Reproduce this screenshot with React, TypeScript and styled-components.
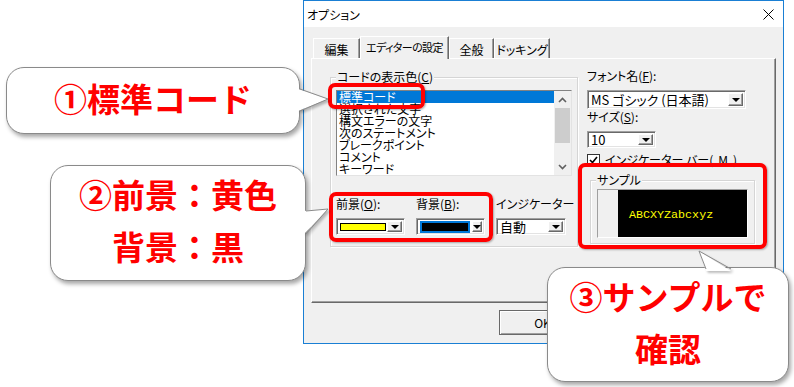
import React from 'react';
import styled, { createGlobalStyle } from 'styled-components';

const uiFont = '"Noto Sans CJK JP", "Noto Sans", sans-serif';

const GlobalStyle = createGlobalStyle`
  body {
    margin: 0;
    background: #fff;
    font-family: ${uiFont};
    font-feature-settings: "palt";
    color: #000;
  }
`;

const Root = styled.div`
  position: relative;
  width: 794px;
  height: 387px;
  overflow: hidden;
  background: #fff;
  padding-left: 303px;
  box-sizing: border-box;
`;

const Dialog = styled.div`
  width: 481px;
  height: 344px;
  border: 1px solid #1a7fd4;
  box-sizing: border-box;
  display: flex;
  flex-direction: column;
  background: #f0f0f0;
`;

const TitleBar = styled.div`
  height: 26px;
  flex: none;
  background: #fff;
  display: flex;
  align-items: center;
  justify-content: space-between;
  padding: 0 9px 0 3px;
  font-size: 12px;
`;

const Body = styled.div`
  flex: 1;
  padding: 8px 7px 0 7px;
  display: flex;
  flex-direction: column;
`;

const TabRow = styled.div`
  display: flex;
  align-items: flex-end;
  padding-left: 2px;
  height: 23px;
`;

const Tab = styled.div<{ $active?: boolean; $w: number }>`
  width: ${(p) => p.$w}px;
  height: ${(p) => (p.$active ? 23 : 20)}px;
  margin-bottom: ${(p) => (p.$active ? -1 : 0)}px;
  position: relative;
  z-index: ${(p) => (p.$active ? 2 : 1)};
  box-sizing: border-box;
  background: #f0f0f0;
  border-top: 1px solid #fff;
  border-left: 1px solid #fff;
  border-right: 1px solid #696969;
  box-shadow: inset -1px 0 0 #a0a0a0;
  font-size: ${(p) => (p.$active ? 11 : 12)}px;
  letter-spacing: ${(p) => (p.$active ? -0.6 : 0)}px;
  line-height: 14px;
  padding-top: ${(p) => (p.$active ? 3 : 4)}px;
  text-align: center;
  white-space: nowrap;
`;

const Panel = styled.div`
  height: 245px;
  box-sizing: border-box;
  border-top: 1px solid #fff;
  border-left: 1px solid #fff;
  border-right: 1px solid #696969;
  border-bottom: 1px solid #696969;
  box-shadow: inset -1px -1px 0 #a0a0a0;
  padding: 18px 0 0 18px;
  display: flex;
  align-items: flex-start;
`;

const Frame = styled.div<{ $w: number; $h: number }>`
  position: relative;
  width: ${(p) => p.$w}px;
  height: ${(p) => p.$h}px;
  box-sizing: border-box;
  border: 1px solid #d5d5d5;
  box-shadow: inset 1px 1px 0 #fff, 1px 1px 0 #fff;
`;

const FrameLabel = styled.div`
  position: absolute;
  top: -8px;
  left: 5px;
  padding: 0 1px;
  background: #f0f0f0;
  font-size: 12px;
  line-height: 14px;
  white-space: nowrap;
`;

const CodeFrame = styled(Frame)`
  padding: 12px 0 0 5px;
`;

const ListBox = styled.div`
  width: 236px;
  height: 86px;
  box-sizing: border-box;
  display: flex;
  border: 1px solid;
  border-color: #828282 #e3e3e3 #e3e3e3 #828282;
  background: #fff;
`;

const ListItems = styled.div`
  flex: 1;
  overflow: hidden;
`;

const ListItem = styled.div<{ $sel?: boolean }>`
  height: 12px;
  line-height: 12px;
  font-size: 12px;
  padding-left: 2px;
  white-space: nowrap;
  background: ${(p) => (p.$sel ? '#0078d7' : 'transparent')};
  color: ${(p) => (p.$sel ? '#fff' : '#000')};
`;

const ScrollBar = styled.div`
  width: 17px;
  display: flex;
  flex-direction: column;
  background: #f0f0f0;
`;

const ScrollArrow = styled.div`
  height: 17px;
  display: flex;
  align-items: center;
  justify-content: center;
`;

const ScrollTrack = styled.div`
  flex: 1;
  padding: 0 1px;
`;

const Thumb = styled.div`
  height: 35px;
  background: #cdcdcd;
`;

const ColorRow = styled.div`
  display: flex;
  gap: 11px;
  margin-top: 21px;
`;

const Field = styled.div`
  display: flex;
  flex-direction: column;
  gap: 7px;
`;

const Label = styled.div`
  font-size: 12px;
  line-height: 14px;
  white-space: nowrap;
`;

const Combo = styled.div<{ $w: number; $h: number }>`
  width: ${(p) => p.$w}px;
  height: ${(p) => p.$h}px;
  box-sizing: border-box;
  display: flex;
  align-items: stretch;
  background: #fff;
  border: 1px solid;
  border-color: #a0a0a0 #fff #fff #a0a0a0;
  box-shadow: inset 1px 1px 0 #696969, inset -1px -1px 0 #e3e3e3;
  padding: 2px 2px 2px 3px;
`;

const ComboValue = styled.div<{ $size?: number }>`
  flex: 1;
  display: flex;
  align-items: center;
  font-size: ${(p) => p.$size ?? 12}px;
  line-height: 1;
  white-space: nowrap;
`;

const DropButton = styled.div`
  width: 15px;
  box-sizing: border-box;
  background: #f0f0f0;
  border: 1px solid;
  border-color: #fff #696969 #696969 #fff;
  box-shadow: inset -1px -1px 0 #a0a0a0;
  display: flex;
  align-items: center;
  justify-content: center;

  &::after {
    content: '';
    border-left: 4px solid transparent;
    border-right: 4px solid transparent;
    border-top: 4px solid #000;
    margin-top: 1px;
  }
`;

const Swatch = styled.div<{ $color: string }>`
  width: 44px;
  height: 6px;
  background: ${(p) => p.$color};
  border: 1px solid #000;
`;

const SelectedSwatch = styled.div`
  background: #0078d7;
  padding: 2px;
  margin-right: 2px;
  display: flex;
  align-items: center;
`;

const RightColumn = styled.div`
  margin-left: 9px;
  margin-top: -8px;
  display: flex;
  flex-direction: column;
`;

const CheckRow = styled.div`
  display: flex;
  align-items: center;
  gap: 5px;
  margin-top: 5px;
  font-size: 12px;
  line-height: 14px;
  white-space: nowrap;
`;

const CheckBox = styled.div`
  width: 13px;
  height: 13px;
  box-sizing: border-box;
  border: 1px solid #333;
  background: #fff;
  display: flex;
  align-items: center;
  justify-content: center;
`;

const SampleFrame = styled(Frame)`
  margin: 13px 0 0 3px;
  padding: 8px 0 0 6px;
`;

const SampleBox = styled.div`
  width: 151px;
  height: 49px;
  box-sizing: border-box;
  display: flex;
  border: 1px solid;
  border-color: #a0a0a0 #fff #fff #a0a0a0;
`;

const SampleGutter = styled.div`
  width: 20px;
  background: #f0f0f0;
`;

const SampleText = styled.div`
  flex: 1;
  background: #000;
  color: #ffff00;
  font-family: "Liberation Mono", monospace;
  font-size: 11.7px;
  display: flex;
  align-items: center;
  padding-left: 11px;
  padding-top: 2px;
`;

const ButtonRow = styled.div`
  display: flex;
  justify-content: flex-end;
  gap: 8px;
  margin-top: 7px;
`;

const Button = styled.div`
  width: 87px;
  height: 25px;
  box-sizing: border-box;
  border: 1px solid #696969;
  box-shadow: inset 1px 1px 0 #fff, inset -1px -1px 0 #a0a0a0;
  background: #f0f0f0;
  display: flex;
  align-items: center;
  justify-content: center;
  font-size: 12px;
`;

const Highlight = styled.div<{ $x: number; $y: number; $w: number; $h: number }>`
  position: absolute;
  left: ${(p) => p.$x}px;
  top: ${(p) => p.$y}px;
  width: ${(p) => p.$w}px;
  height: ${(p) => p.$h}px;
  box-sizing: border-box;
  border: 4px solid #ff0000;
  border-radius: 7px;
  box-shadow: 1px 1px 2px rgba(0, 0, 0, 0.3);
  z-index: 5;
`;

const Bubble = styled.div<{ $x: number; $y: number; $w: number; $h: number }>`
  position: absolute;
  left: ${(p) => p.$x}px;
  top: ${(p) => p.$y}px;
  width: ${(p) => p.$w}px;
  height: ${(p) => p.$h}px;
  box-sizing: border-box;
  background: #fff;
  border: 1px solid #8a8a8a;
  border-radius: 18px;
  box-shadow: 2px 3px 4px rgba(0, 0, 0, 0.35);
  display: flex;
  flex-direction: column;
  align-items: center;
  justify-content: center;
  padding-bottom: 6px;
  color: #ff0000;
  font-family: ${uiFont};
  font-feature-settings: normal;
  font-weight: 700;
  font-size: 33px;
  line-height: 52px;
  white-space: nowrap;
  z-index: 10;
`;

const Tail = styled.svg`
  position: absolute;
  overflow: visible;
  filter: drop-shadow(2px 2px 1px rgba(0, 0, 0, 0.25));
`;

const CloseIcon = () => (
  <svg width="11" height="11" viewBox="0 0 11 11">
    <path d="M0.5 0.5 L10.5 10.5 M10.5 0.5 L0.5 10.5" stroke="#000" strokeWidth="1" />
  </svg>
);

const Chevron = ({ down }: { down?: boolean }) => (
  <svg width="9" height="6" viewBox="0 0 9 6">
    <path
      d={down ? 'M1 1 L4.5 4.5 L8 1' : 'M1 5 L4.5 1.5 L8 5'}
      fill="none"
      stroke="#606060"
      strokeWidth="1.6"
    />
  </svg>
);

const codeItems = [
  '標準コード',
  '選択された文字',
  '構文エラーの文字',
  '次のステートメント',
  'ブレークポイント',
  'コメント',
  'キーワード',
];

export default function App() {
  return (
    <>
      <GlobalStyle />
      <Root>
        <Dialog>
          <TitleBar>
            <span>オプション</span>
            <CloseIcon />
          </TitleBar>
          <Body>
            <TabRow>
              <Tab $w={47}>編集</Tab>
              <Tab $w={89} $active>
                エディターの設定
              </Tab>
              <Tab $w={45}>全般</Tab>
              <Tab $w={56}>ドッキング</Tab>
            </TabRow>
            <Panel>
              <CodeFrame $w={248} $h={170}>
                <FrameLabel>
                  コードの表示色(<u>C</u>)
                </FrameLabel>
                <ListBox>
                  <ListItems>
                    {codeItems.map((item, i) => (
                      <ListItem key={item} $sel={i === 0}>
                        {item}
                      </ListItem>
                    ))}
                  </ListItems>
                  <ScrollBar>
                    <ScrollArrow>
                      <Chevron />
                    </ScrollArrow>
                    <ScrollTrack>
                      <Thumb />
                    </ScrollTrack>
                    <ScrollArrow>
                      <Chevron down />
                    </ScrollArrow>
                  </ScrollBar>
                </ListBox>
                <ColorRow>
                  <Field>
                    <Label>
                      前景(<u>O</u>):
                    </Label>
                    <Combo $w={69} $h={17}>
                      <ComboValue>
                        <Swatch $color="#ffff00" />
                      </ComboValue>
                      <DropButton />
                    </Combo>
                  </Field>
                  <Field>
                    <Label>
                      背景(<u>B</u>):
                    </Label>
                    <Combo $w={69} $h={17}>
                      <ComboValue>
                        <SelectedSwatch>
                          <Swatch $color="#000" />
                        </SelectedSwatch>
                      </ComboValue>
                      <DropButton />
                    </Combo>
                  </Field>
                  <Field>
                    <Label>インジケーター</Label>
                    <Combo $w={70} $h={17}>
                      <ComboValue $size={13}>自動</ComboValue>
                      <DropButton />
                    </Combo>
                  </Field>
                </ColorRow>
              </CodeFrame>
              <RightColumn>
                <Field>
                  <Label>
                    フォント名(<u>F</u>):
                  </Label>
                  <Combo $w={159} $h={19}>
                    <ComboValue $size={13}>MS ゴシック (日本語)</ComboValue>
                    <DropButton />
                  </Combo>
                </Field>
                <Field style={{ marginTop: 1 }}>
                  <Label>
                    サイズ(<u>S</u>):
                  </Label>
                  <Combo $w={69} $h={17}>
                    <ComboValue $size={13}>10</ComboValue>
                    <DropButton />
                  </Combo>
                </Field>
                <CheckRow>
                  <CheckBox>
                    <svg width="9" height="8" viewBox="0 0 9 8">
                      <path d="M1 4 L3.5 6.5 L8 1" fill="none" stroke="#000" strokeWidth="1.6" />
                    </svg>
                  </CheckBox>
                  インジケーター バー(<u>M</u>)
                </CheckRow>
                <SampleFrame $w={165} $h={64}>
                  <FrameLabel>サンプル</FrameLabel>
                  <SampleBox>
                    <SampleGutter />
                    <SampleText>ABCXYZabcxyz</SampleText>
                  </SampleBox>
                </SampleFrame>
              </RightColumn>
            </Panel>
            <ButtonRow>
              <Button>OK</Button>
              <Button>キャンセル</Button>
              <Button>ヘルプ</Button>
            </ButtonRow>
          </Body>
        </Dialog>

        <Highlight $x={328} $y={83} $w={97} $h={26} />
        <Highlight $x={329} $y={192} $w={164} $h={50} />
        <Highlight $x={578} $y={163} $w={189} $h={86} />

        <Bubble $x={6} $y={67} $w={294} $h={67}>
          ①標準コード
          <Tail style={{ left: 291, top: 0 }} width="32" height="67">
            <polygon points="0,21 30,31 0,43" fill="#fff" />
            <polyline points="2,21 30,31 2,43" fill="none" stroke="#8a8a8a" strokeWidth="1" />
          </Tail>
        </Bubble>

        <Bubble $x={50} $y={165} $w={256} $h={116}>
          <span>②前景：黄色</span>
          <span>背景：黒</span>
          <Tail style={{ left: 253, top: 0 }} width="26" height="116">
            <polygon points="0,45 24,43 0,68" fill="#fff" />
            <polyline points="2,45 24,43 2,68" fill="none" stroke="#8a8a8a" strokeWidth="1" />
          </Tail>
        </Bubble>

        <Bubble $x={547} $y={267} $w={242} $h={115}>
          <span>③サンプルで</span>
          <span>確認</span>
          <Tail style={{ left: 0, top: -20 }} width="242" height="24">
            <polygon points="158,23 151,3 183,23" fill="#fff" />
            <polyline points="158,21 151,3 183,21" fill="none" stroke="#8a8a8a" strokeWidth="1" />
          </Tail>
        </Bubble>
      </Root>
    </>
  );
}
